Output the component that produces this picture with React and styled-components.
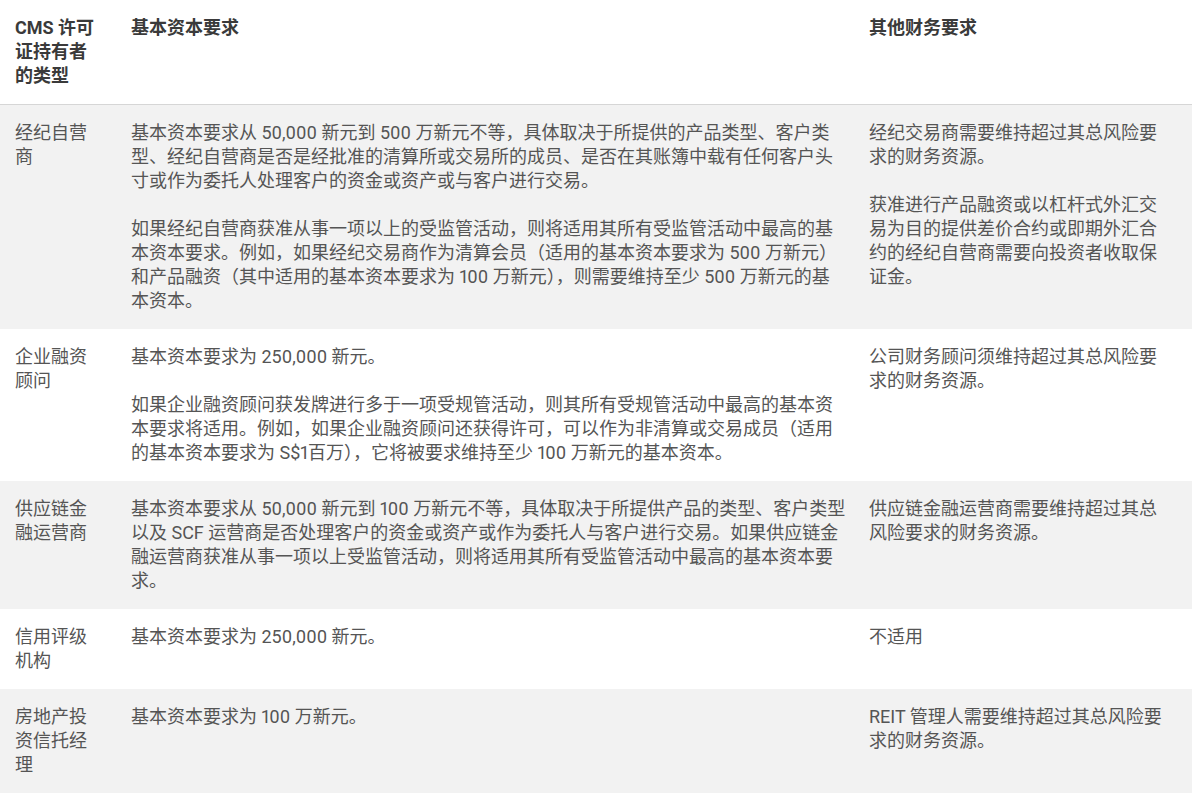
import React from "react";
import styled, { createGlobalStyle } from "styled-components";

const rows = [
  {
    type: "经纪自营商",
    capital: [
      "基本资本要求从 50,000 新元到 500 万新元不等，具体取决于所提供的产品类型、客户类型、经纪自营商是否是经批准的清算所或交易所的成员、是否在其账簿中载有任何客户头寸或作为委托人处理客户的资金或资产或与客户进行交易。",
      "如果经纪自营商获准从事一项以上的受监管活动，则将适用其所有受监管活动中最高的基本资本要求。例如，如果经纪交易商作为清算会员（适用的基本资本要求为 500 万新元）和产品融资（其中适用的基本资本要求为 100 万新元），则需要维持至少 500 万新元的基本资本。",
    ],
    other: [
      "经纪交易商需要维持超过其总风险要求的财务资源。",
      "获准进行产品融资或以杠杆式外汇交易为目的提供差价合约或即期外汇合约的经纪自营商需要向投资者收取保证金。",
    ],
  },
  {
    type: "企业融资顾问",
    capital: [
      "基本资本要求为 250,000 新元。",
      "如果企业融资顾问获发牌进行多于一项受规管活动，则其所有受规管活动中最高的基本资本要求将适用。例如，如果企业融资顾问还获得许可，可以作为非清算或交易成员（适用的基本资本要求为 S$1百万），它将被要求维持至少 100 万新元的基本资本。",
    ],
    other: ["公司财务顾问须维持超过其总风险要求的财务资源。"],
  },
  {
    type: "供应链金融运营商",
    capital: [
      "基本资本要求从 50,000 新元到 100 万新元不等，具体取决于所提供产品的类型、客户类型以及 SCF 运营商是否处理客户的资金或资产或作为委托人与客户进行交易。如果供应链金融运营商获准从事一项以上受监管活动，则将适用其所有受监管活动中最高的基本资本要求。",
    ],
    other: ["供应链金融运营商需要维持超过其总风险要求的财务资源。"],
  },
  {
    type: "信用评级机构",
    capital: ["基本资本要求为 250,000 新元。"],
    other: ["不适用"],
  },
  {
    type: "房地产投资信托经理",
    capital: ["基本资本要求为 100 万新元。"],
    other: ["REIT 管理人需要维持超过其总风险要求的财务资源。"],
  },
];

const GlobalStyle = createGlobalStyle`
  body {
    margin: 0;
    background: #ffffff;
    font-family: Roboto, "Noto Sans CJK SC", sans-serif;
  }
`;

const Table = styled.table`
  width: 100%;
  table-layout: fixed;
  border-collapse: collapse;
  font-size: 18px;
  line-height: 24px;
  color: #555555;
  font-variant-numeric: proportional-nums;
  border-bottom: 1px solid #d6d6d6;
`;

const HeadRow = styled.tr`
  border-bottom: 1px solid #d6d6d6;
`;

const padRight = (p) => (p.$wide ? "8px" : p.$last ? "27px" : "15px");

const Th = styled.th`
  text-align: left;
  vertical-align: top;
  font-weight: 700;
  color: #3a3a3a;
  padding: 16px ${padRight} 16px 15px;
`;

const Row = styled.tr`
  &:nth-child(odd) {
    background: #f2f2f2;
  }
`;

const Td = styled.td`
  vertical-align: top;
  padding: 16px ${padRight} 16px 15px;
`;

const Para = styled.p`
  margin: 0;
  & + & {
    margin-top: 24px;
  }
`;

export default function App() {
  return (
    <>
      <GlobalStyle />
      <Table>
        <colgroup>
          <col style={{ width: 116 }} />
          <col style={{ width: 738 }} />
          <col />
        </colgroup>
        <thead>
          <HeadRow>
            <Th>CMS 许可证持有者的类型</Th>
            <Th $wide>基本资本要求</Th>
            <Th $last>其他财务要求</Th>
          </HeadRow>
        </thead>
        <tbody>
          {rows.map((r) => (
            <Row key={r.type}>
              <Td>{r.type}</Td>
              <Td $wide>
                {r.capital.map((t, i) => (
                  <Para key={i}>{t}</Para>
                ))}
              </Td>
              <Td $last>
                {r.other.map((t, i) => (
                  <Para key={i}>{t}</Para>
                ))}
              </Td>
            </Row>
          ))}
        </tbody>
      </Table>
    </>
  );
}
